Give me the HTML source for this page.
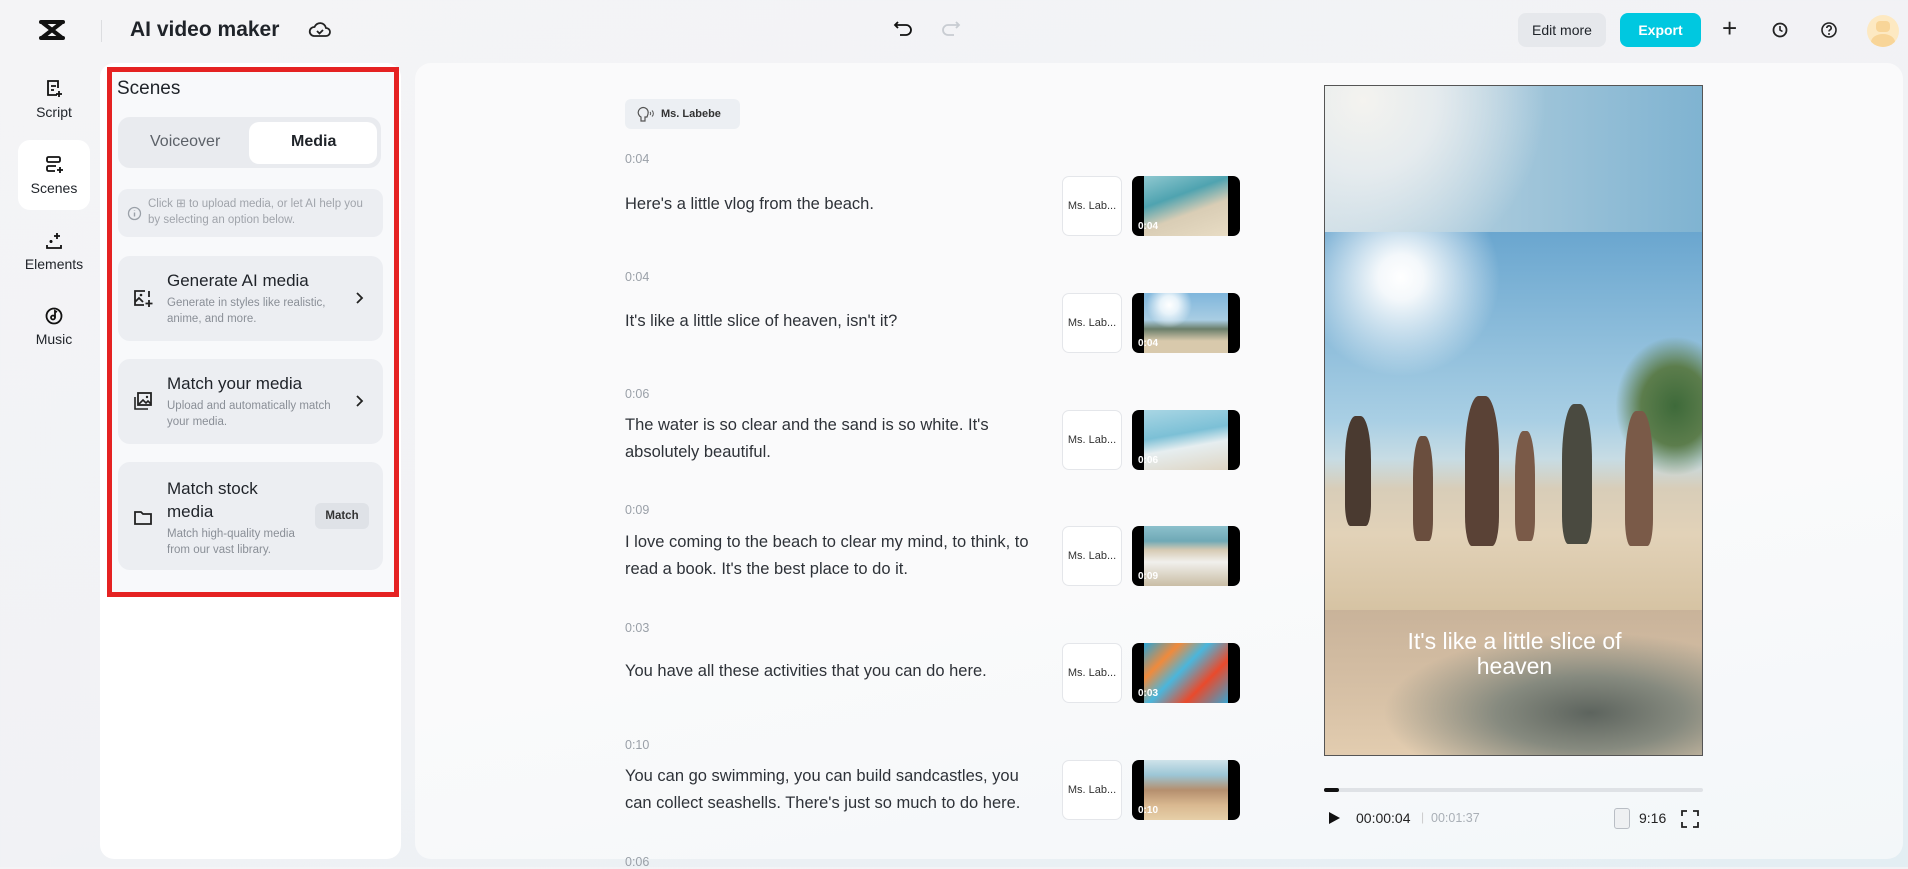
<!DOCTYPE html>
<html><head><meta charset="utf-8"><style>
*{margin:0;padding:0;box-sizing:border-box}
body{width:1908px;height:867px;overflow:hidden;font-family:"Liberation Sans",sans-serif;background:linear-gradient(160deg,#f4f4f6 0%,#f1f2f5 55%,#e3eef3 100%);position:relative;color:#1f2329}
.a{position:absolute}
.nav{width:72px;text-align:center;font-size:14px;color:#1f2329;left:18px}
.nav svg{display:block;margin:0 auto 4px}
.card{position:absolute;left:118px;width:265px;background:#eceef2;border-radius:12px}
.card .t{position:absolute;left:49px;font-size:17px;color:#1f2329}
.card .d{position:absolute;left:49px;font-size:11.5px;color:#8a8f97;line-height:16px}
.ts{position:absolute;left:625px;font-size:12.5px;color:#9aa0a8}
.tx{position:absolute;left:625px;font-size:16.5px;color:#2e3238;line-height:27px;width:420px}
.vb{position:absolute;left:1062px;width:60px;height:60px;border:1px solid #e4e6ea;border-radius:7px;background:#fff;font-size:11px;color:#333;display:flex;align-items:center;justify-content:center}
.th{position:absolute;left:1132px;width:108px;height:60px;background:#000;border-radius:7px;overflow:hidden}
.th div{position:absolute;left:12px;right:12px;top:0;bottom:0}
.th span{position:absolute;left:6px;bottom:4px;color:#fff;font-size:10px;font-weight:bold}
.p{position:absolute;background:#4a3a30;border-radius:40% 40% 20% 20%}
</style></head><body>
<svg class="a" style="left:38px;top:19px" width="28" height="22" viewBox="0 0 28 22"><path d="M3 3h22M3 19h22M5 4l18 14M23 4L5 18" stroke="#111" stroke-width="4" fill="none" stroke-linecap="round"/></svg>
<div class="a" style="left:101px;top:20px;width:1px;height:22px;background:#dcdde0"></div>
<div class="a" style="left:130px;top:18px;font-size:21px;font-weight:bold;color:#1f2329">AI video maker</div>
<svg class="a" style="left:308px;top:19px" width="24" height="22" viewBox="0 0 24 22"><path d="M6 17h12a4 4 0 0 0 0-8 6 6 0 0 0-11.5-1A4.5 4.5 0 0 0 6 17z M9 12l2.5 2.5L15 11" stroke="#222" stroke-width="1.8" fill="none"/></svg>
<svg class="a" style="left:893px;top:18px" width="22" height="22" viewBox="0 0 22 22"><path d="M5 4L2 7l3 3M2 7h11a5 5 0 0 1 0 10H7" stroke="#111" stroke-width="1.8" fill="none"/></svg>
<svg class="a" style="left:939px;top:18px" width="22" height="22" viewBox="0 0 22 22"><path d="M17 4l3 3-3 3M20 7H9a5 5 0 0 0 0 10h6" stroke="#c8ccd2" stroke-width="1.8" fill="none"/></svg>
<div class="a" style="left:1518px;top:13px;width:88px;height:34px;background:#e6e8ec;border-radius:8px;font-size:14px;display:flex;align-items:center;justify-content:center;color:#1f2329">Edit more</div>
<div class="a" style="left:1620px;top:13px;width:81px;height:34px;background:#00c8e0;border-radius:8px;font-size:14px;font-weight:bold;display:flex;align-items:center;justify-content:center;color:#fff">Export</div>
<div class="a" style="left:1722px;top:13px;font-size:26px;color:#222;font-weight:300">+</div>
<svg class="a" style="left:1771px;top:21px" width="18" height="18" viewBox="0 0 18 18"><circle cx="9" cy="9" r="6.5" stroke="#222" stroke-width="1.8" fill="none"/><path d="M9 5v4l2.5 1.5" stroke="#222" stroke-width="1.6" fill="none"/></svg>
<svg class="a" style="left:1820px;top:21px" width="18" height="18" viewBox="0 0 18 18"><circle cx="9" cy="9" r="7" stroke="#222" stroke-width="1.6" fill="none"/><path d="M6.8 7a2.2 2.2 0 1 1 3 2c-.7.3-.8.8-.8 1.5" stroke="#222" stroke-width="1.6" fill="none"/><circle cx="9" cy="13" r="1" fill="#222"/></svg>
<div class="a" style="left:1867px;top:15px;width:32px;height:32px;border-radius:50%;background:#fde9c2;overflow:hidden"><div style="position:absolute;left:9px;top:6px;width:14px;height:11px;background:#f8d598;border-radius:4px"></div><div style="position:absolute;left:4px;top:19px;width:24px;height:16px;background:#f8d598;border-radius:50%"></div></div>
<div class="a" style="left:18px;top:140px;width:72px;height:70px;background:#fff;border-radius:12px"></div>
<div class="a nav" style="top:78px"><svg width="20" height="22" viewBox="0 0 20 22"><path d="M13 17H4V3h10v7M7 8h5M7 12h3M15 13v6M12 16h6" stroke="#111" stroke-width="1.8" fill="none"/></svg>Script</div>
<div class="a nav" style="top:154px"><svg width="20" height="22" viewBox="0 0 20 22"><rect x="3" y="3" width="13" height="5" rx="1.5" stroke="#111" stroke-width="1.8" fill="none"/><path d="M12 12H4.5A1.5 1.5 0 0 0 3 13.5v2A1.5 1.5 0 0 0 4.5 17H11M16 13v6M13 16h6" stroke="#111" stroke-width="1.8" fill="none"/></svg>Scenes</div>
<div class="a nav" style="top:230px"><svg width="20" height="22" viewBox="0 0 20 22"><path d="M3 15v3h14v-3M13 3v6M10 6h6M7 10v3M5.5 11.5h3" stroke="#111" stroke-width="1.8" fill="none"/></svg>Elements</div>
<div class="a nav" style="top:305px"><svg width="20" height="22" viewBox="0 0 20 22"><circle cx="10" cy="11" r="7.5" stroke="#111" stroke-width="1.8" fill="none"/><circle cx="9" cy="12.5" r="2" stroke="#111" stroke-width="1.8" fill="none"/><path d="M11 12.5V6l2 1" stroke="#111" stroke-width="1.8" fill="none"/></svg>Music</div>
<div class="a" style="left:100px;top:63px;width:301px;height:796px;background:#fff;border-radius:14px"></div>
<div class="a" style="left:107px;top:67px;width:292px;height:530px;border:5px solid #e52222;background:#f8f9fb"></div>
<div class="a" style="left:117px;top:78px;font-size:19px;color:#1f2329">Scenes</div>
<div class="a" style="left:118px;top:117px;width:263px;height:51px;background:#e9ebef;border-radius:12px"></div>
<div class="a" style="left:249px;top:122px;width:128px;height:42px;background:#fff;border-radius:10px"></div>
<div class="a" style="left:150px;top:133px;font-size:16px;color:#5c6168">Voiceover</div>
<div class="a" style="left:291px;top:133px;font-size:16px;color:#1f2329;font-weight:bold">Media</div>
<div class="a" style="left:118px;top:189px;width:265px;height:48px;background:#eceef2;border-radius:10px"></div>
<svg class="a" style="left:127px;top:206px" width="15" height="15" viewBox="0 0 15 15"><circle cx="7.5" cy="7.5" r="6" stroke="#9aa0a8" stroke-width="1.3" fill="none"/><path d="M7.5 6.5v4M7.5 4.5v.5" stroke="#9aa0a8" stroke-width="1.4"/></svg>
<div class="a" style="left:148px;top:196px;width:230px;font-size:11.5px;line-height:16px;color:#a0a4ab">Click ⊞ to upload media, or let AI help you by selecting an option below.</div>
<div class="card" style="top:256px;height:85px"><div class="t" style="top:15px">Generate AI media</div><div class="d" style="top:39px">Generate in styles like realistic,<br>anime, and more.</div>
<svg class="a" style="left:14px;top:32px" width="22" height="22" viewBox="0 0 22 22"><path d="M13 3H3v14h9M3 14l4-4 4 4M17 12v7M13.5 15.5h7" stroke="#222" stroke-width="1.8" fill="none"/><circle cx="9" cy="7" r="1.3" fill="#222"/><path d="M17 3v6" stroke="#222" stroke-width="1.8"/></svg>
<svg class="a" style="left:236px;top:35px" width="10" height="14" viewBox="0 0 10 14"><path d="M3 2l5 5-5 5" stroke="#222" stroke-width="1.8" fill="none"/></svg></div>
<div class="card" style="top:359px;height:85px"><div class="t" style="top:15px">Match your media</div><div class="d" style="top:39px">Upload and automatically match<br>your media.</div>
<svg class="a" style="left:14px;top:31px" width="22" height="22" viewBox="0 0 22 22"><rect x="6" y="3" width="13" height="12" stroke="#222" stroke-width="1.8" fill="none"/><path d="M3 7v12h13M7 14l4-4 3 3 2-2 3 3" stroke="#222" stroke-width="1.6" fill="none"/><circle cx="15" cy="7" r="1.2" fill="#222"/></svg>
<svg class="a" style="left:236px;top:35px" width="10" height="14" viewBox="0 0 10 14"><path d="M3 2l5 5-5 5" stroke="#222" stroke-width="1.8" fill="none"/></svg></div>
<div class="card" style="top:462px;height:108px"><div class="t" style="top:15px;line-height:23px">Match stock<br>media</div><div class="d" style="top:64px">Match high-quality media<br>from our vast library.</div>
<svg class="a" style="left:14px;top:45px" width="22" height="22" viewBox="0 0 22 22"><path d="M3 5h6l2 2h8v10H3z" stroke="#222" stroke-width="1.8" fill="none"/></svg>
<div class="a" style="left:197px;top:41px;width:54px;height:26px;background:#dfe2e7;border-radius:6px;font-size:11.5px;font-weight:bold;color:#333;display:flex;align-items:center;justify-content:center">Match</div></div>
<div class="a" style="left:415px;top:63px;width:1488px;height:796px;background:linear-gradient(170deg,#fafafb 60%,#f3f7f9 100%);border-radius:16px"></div>
<div class="a" style="left:625px;top:99px;width:115px;height:30px;background:#eceff3;border-radius:6px;font-size:11px;font-weight:bold;color:#333;display:flex;align-items:center;padding-left:36px">Ms. Labebe</div>
<svg class="a" style="left:636px;top:105px" width="20" height="18" viewBox="0 0 20 18"><path d="M5 16v-4a5 5 0 1 1 7-3l-1 3H9v4z" stroke="#555" stroke-width="1.2" fill="none"/><path d="M14 7a2 2 0 0 1 0 3M16 5.5a4 4 0 0 1 0 6" stroke="#555" stroke-width="1" fill="none"/></svg>

<div class="ts" style="top:152px">0:04</div><div class="tx" style="top:191px">Here's a little vlog from the beach.</div>
<div class="vb" style="top:176px">Ms. Lab...</div><div class="th" style="top:176px"><div style="background:linear-gradient(160deg,#8fc8d0 0%,#4fa3b0 35%,#d9cdb5 60%,#e8dcc4 100%)"></div><span>0:04</span></div>

<div class="ts" style="top:270px">0:04</div><div class="tx" style="top:308px">It's like a little slice of heaven, isn't it?</div>
<div class="vb" style="top:293px">Ms. Lab...</div><div class="th" style="top:293px"><div style="background:radial-gradient(circle at 30% 20%,#fff 0,#e8f3fa 12%,transparent 30%),linear-gradient(180deg,#7fb6dc 0%,#a9cde3 45%,#6a7e6a 60%,#d8c9ac 80%)"></div><span>0:04</span></div>

<div class="ts" style="top:387px">0:06</div><div class="tx" style="top:412px">The water is so clear and the sand is so white. It's absolutely beautiful.</div>
<div class="vb" style="top:410px">Ms. Lab...</div><div class="th" style="top:410px"><div style="background:linear-gradient(170deg,#a9d6e4 0%,#7cc0d6 40%,#e6eef0 60%,#ded5c4 100%)"></div><span>0:06</span></div>

<div class="ts" style="top:503px">0:09</div><div class="tx" style="top:529px">I love coming to the beach to clear my mind, to think, to read a book. It's the best place to do it.</div>
<div class="vb" style="top:526px">Ms. Lab...</div><div class="th" style="top:526px"><div style="background:linear-gradient(180deg,#8cc0cc 0%,#6fa9b6 25%,#d6cab3 40%,#f1f0ec 60%,#c9bda5 100%)"></div><span>0:09</span></div>

<div class="ts" style="top:621px">0:03</div><div class="tx" style="top:658px">You have all these activities that you can do here.</div>
<div class="vb" style="top:643px">Ms. Lab...</div><div class="th" style="top:643px"><div style="background:linear-gradient(135deg,#2aa5d6 0%,#f08a3c 25%,#4ab6dc 45%,#e94a2c 70%,#3aa4d0 100%)"></div><span>0:03</span></div>

<div class="ts" style="top:738px">0:10</div><div class="tx" style="top:763px">You can go swimming, you can build sandcastles, you can collect seashells. There's just so much to do here.</div>
<div class="vb" style="top:760px">Ms. Lab...</div><div class="th" style="top:760px"><div style="background:linear-gradient(180deg,#cfe3ea 0%,#9cc6d6 25%,#b58f6e 50%,#d9b890 75%,#e6cfa8 100%)"></div><span>0:10</span></div>
<div class="ts" style="top:855px">0:06</div>

<div class="a" style="left:1324px;top:85px;width:379px;height:671px;overflow:hidden;border:1px solid #555">
<div class="a" style="left:0;top:0;width:379px;height:146px;background:radial-gradient(circle at 10% 10%,#f4f3ef 0,#e5ebee 20%,transparent 50%),linear-gradient(90deg,#c5d9e3,#7fb3d1)"></div>
<div class="a" style="left:0;top:146px;width:379px;height:378px;background:radial-gradient(circle at 20% 12%,#fff 0,#f4f8fb 5%,rgba(255,255,255,0) 22%),linear-gradient(180deg,#6aa6cf 0%,#a9cfe4 50%,#c7dce4 60%,#d8cdb8 68%,#e2d2b8 80%,#d6c3a3 100%)"></div>
<div class="a" style="left:290px;top:250px;width:100px;height:140px;background:radial-gradient(ellipse at 60% 50%,#3e6a3a 0,#5c7d4c 40%,transparent 70%)"></div>
<div class="p" style="left:20px;top:330px;width:26px;height:110px"></div>
<div class="p" style="left:88px;top:350px;width:20px;height:105px;background:#6a4e3e"></div>
<div class="p" style="left:140px;top:310px;width:34px;height:150px;background:#5a4236"></div>
<div class="p" style="left:190px;top:345px;width:20px;height:110px;background:#7a5a48"></div>
<div class="p" style="left:237px;top:318px;width:30px;height:140px;background:#4a4a40"></div>
<div class="p" style="left:300px;top:325px;width:28px;height:135px;background:#7a5a48"></div>
<div class="a" style="left:0;top:524px;width:379px;height:147px;background:radial-gradient(ellipse at 70% 70%,#5d645e 0,#868a7f 25%,transparent 55%),linear-gradient(180deg,#c9b39a,#d7c1a6 60%,#e3cdb0)"></div>
<div class="a" style="left:0;top:543px;width:379px;text-align:center;color:#fff;font-size:23px;line-height:25px">It's like a little slice of<br>heaven</div>
</div>
<div class="a" style="left:1324px;top:788px;width:379px;height:4px;background:#dfe2e6;border-radius:2px"></div>
<div class="a" style="left:1324px;top:788px;width:15px;height:4px;background:#111;border-radius:2px"></div>
<svg class="a" style="left:1327px;top:810px" width="14" height="16" viewBox="0 0 14 16"><path d="M2 2l11 6-11 6z" fill="#111"/></svg>
<div class="a" style="left:1356px;top:810px;font-size:14px;color:#222">00:00:04</div>
<div class="a" style="left:1421px;top:810px;font-size:12px;color:#ccc">|</div>
<div class="a" style="left:1431px;top:811px;font-size:12.5px;color:#a9afb6">00:01:37</div>
<div class="a" style="left:1614px;top:808px;width:16px;height:21px;border:1.5px solid #b9bec5;border-radius:3px;background:#eef0f2"></div>
<div class="a" style="left:1639px;top:810px;font-size:14px;color:#222">9:16</div>
<svg class="a" style="left:1681px;top:810px" width="18" height="18" viewBox="0 0 18 18"><path d="M1 6V1h5M12 1h5v5M17 12v5h-5M6 17H1v-5" stroke="#222" stroke-width="1.8" fill="none"/></svg>
</body></html>
